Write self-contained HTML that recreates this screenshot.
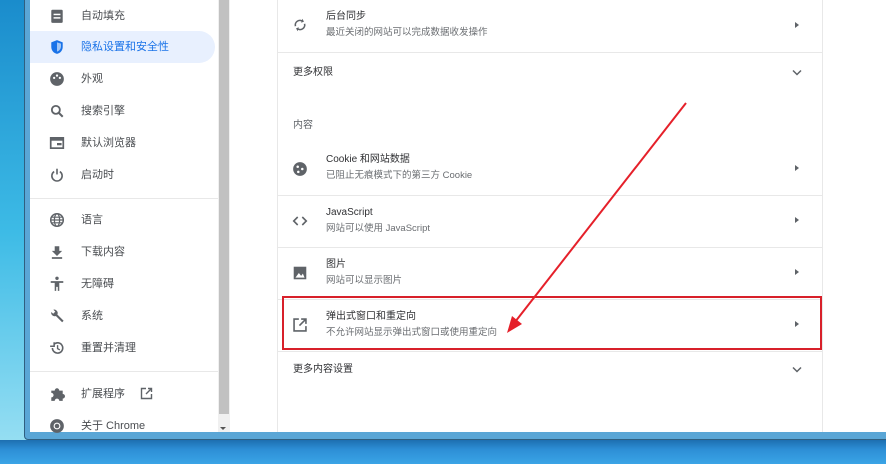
<!DOCTYPE html>
<html><head><meta charset="utf-8"><style>
*{margin:0;padding:0;box-sizing:border-box}
body{width:886px;height:464px;overflow:hidden;position:relative;font-family:"Liberation Sans","Noto Sans CJK SC",sans-serif;background:linear-gradient(180deg,#1a8ccc 0%,#3dbbe6 50%,#9fe2f4 100%)}
.bottom{position:absolute;left:0;top:440px;width:886px;height:24px;background:linear-gradient(180deg,#1d6fb0,#2d8fd6 40%,#3aa4e6)}
.win{position:absolute;left:24px;top:-10px;width:880px;height:450px;background:#5aa6d6;border:1px solid #2f5f80;border-radius:0 0 4px 4px}
.side{position:absolute;left:30px;top:0;width:188px;height:432px;background:#fff}
.sb{position:absolute;left:218px;top:0;width:12px;height:432px;background:#f0f0f0}
.thumb{position:absolute;left:219px;top:0;width:10px;height:414px;background:#c1c1c1}
.main{position:absolute;left:230px;top:0;width:656px;height:432px;background:#fff}
.card{position:absolute;left:277px;top:0;width:546px;height:432px;border-left:1px solid #e8e8e8;border-right:1px solid #e8e8e8;background:#fff}
.it{position:absolute;left:30px;width:185px;height:32px;font-size:11px;color:#4a4d51;line-height:32px;padding-left:51px}
.it.sel{background:#e8f0fe;color:#1a73e8;border-radius:0 16px 16px 0}
.ic{position:absolute;left:19px;top:8px;width:16px;height:16px}
.hr{position:absolute;left:30px;width:188px;height:1px;background:#e8e8e8}
.row{position:absolute;left:278px;width:544px;border-top:1px solid #e8e8e8}
.t1{position:absolute;left:48px;font-size:10px;line-height:13px;color:#303134}
.t2{position:absolute;left:48px;font-size:9.5px;line-height:13px;color:#6a6d71}
.ri{position:absolute;left:14px;width:16px;height:16px}
.tri{position:absolute;left:517px;width:0;height:0;border-left:4px solid #5f6368;border-top:3.5px solid transparent;border-bottom:3.5px solid transparent}
.lab{position:absolute;left:293px;font-size:10px;line-height:13px;color:#303134}
</style></head><body>
<div class="bottom"></div>
<div class="win"></div>
<div class="side"></div>
<div class="sb"></div><div class="thumb"></div>
<div style="position:absolute;left:220px;top:427px;border-top:3px solid #555;border-left:3px solid transparent;border-right:3px solid transparent"></div>
<div class="main"></div>
<div class="card"></div>

<div class="it" style="top:0">自动填充<svg class="ic" viewBox="0 0 14 14"><rect x="2" y="1.5" width="10" height="11.5" rx="1" fill="#5f6368"/><rect x="4" y="5" width="6" height="1.3" fill="#fff"/><rect x="4" y="8" width="6" height="1.3" fill="#fff"/></svg></div>
<div class="it sel" style="top:31px">隐私设置和安全性<svg class="ic" viewBox="0 0 14 14"><path d="M7 1L2 3v4c0 3 2.2 5.5 5 6 2.8-.5 5-3 5-6V3z" fill="#1a73e8"/><path d="M7 3v8c2-.5 3.5-2.3 3.5-4.5V4z" fill="#fff" opacity=".6"/></svg></div>
<div class="it" style="top:63px">外观<svg class="ic" viewBox="0 0 14 14"><circle cx="7" cy="7" r="6" fill="#5f6368"/><circle cx="4.5" cy="6" r="1" fill="#fff"/><circle cx="7" cy="4" r="1" fill="#fff"/><circle cx="9.5" cy="6" r="1" fill="#fff"/></svg></div>
<div class="it" style="top:95px">搜索引擎<svg class="ic" viewBox="0 0 14 14"><circle cx="6" cy="6" r="3.5" stroke="#5f6368" stroke-width="1.6" fill="none"/><path d="M8.5 8.5L12 12" stroke="#5f6368" stroke-width="1.8"/></svg></div>
<div class="it" style="top:127px">默认浏览器<svg class="ic" viewBox="0 0 14 14"><rect x="1.5" y="2.5" width="11" height="9" stroke="#5f6368" stroke-width="1.5" fill="none"/><rect x="1.5" y="2.5" width="11" height="2.5" fill="#5f6368"/><rect x="7" y="7" width="4" height="2" fill="#5f6368"/></svg></div>
<div class="it" style="top:159px">启动时<svg class="ic" viewBox="0 0 14 14"><path d="M4.5 4a4.5 4.5 0 1 0 5 0" stroke="#5f6368" stroke-width="1.4" fill="none"/><path d="M7 1.5v5" stroke="#5f6368" stroke-width="1.4"/></svg></div>
<div class="hr" style="top:198px"></div>
<div class="it" style="top:204px">语言<svg class="ic" viewBox="0 0 14 14"><circle cx="7" cy="7" r="5.5" stroke="#5f6368" stroke-width="1.3" fill="none"/><ellipse cx="7" cy="7" rx="2.3" ry="5.5" stroke="#5f6368" stroke-width="1.1" fill="none"/><path d="M1.5 7h11M2.5 4.5h9M2.5 9.5h9" stroke="#5f6368" stroke-width="1"/></svg></div>
<div class="it" style="top:236px">下载内容<svg class="ic" viewBox="0 0 14 14"><path d="M5 2h4v4h2.5L7 10.5 2.5 6H5z" fill="#5f6368"/><rect x="2.5" y="11.5" width="9" height="1.5" fill="#5f6368"/></svg></div>
<div class="it" style="top:268px">无障碍<svg class="ic" viewBox="0 0 14 14"><circle cx="7" cy="2" r="1.5" fill="#5f6368"/><path d="M1.5 4.5h11v1.5H9V13H7.7V9.5H6.3V13H5V6H1.5z" fill="#5f6368"/></svg></div>
<div class="it" style="top:300px">系统<svg class="ic" viewBox="0 0 14 14"><path d="M2 3.5a3 3 0 0 0 4 3.5l5.5 5.5 1.3-1.3L7.3 5.7A3 3 0 0 0 3.8 1.5L5.5 3.2 3.7 5z" fill="#5f6368"/></svg></div>
<div class="it" style="top:332px">重置并清理<svg class="ic" viewBox="0 0 14 14"><path d="M3 7a4.5 4.5 0 1 0 1.3-3.2" stroke="#5f6368" stroke-width="1.4" fill="none"/><path d="M1 5.5h3.5V2" stroke="#5f6368" stroke-width="1.3" fill="none"/><path d="M7.5 4.5v3l2 1.2" stroke="#5f6368" stroke-width="1.2" fill="none"/></svg></div>
<div class="hr" style="top:371px"></div>
<div class="it" style="top:378px">扩展程序<svg class="ic" viewBox="0 0 14 14"><path d="M2 4h3a2 2 0 0 1 4 0h3v3a2 2 0 0 1 0 4v2H9a2 2 0 0 0-4 0H2v-3a2 2 0 0 0 0-4z" fill="#5f6368"/></svg><svg style="position:absolute;left:110px;top:9px" width="13" height="13" viewBox="0 0 13 13"><path d="M6 1.5H1.5v10h10V7" stroke="#5f6368" stroke-width="1.4" fill="none"/><path d="M8 1.5h3.5V5M11.5 1.5L6 7" stroke="#5f6368" stroke-width="1.4" fill="none"/></svg></div>
<div class="it" style="top:410px">关于 Chrome<svg class="ic" viewBox="0 0 14 14"><circle cx="7" cy="7" r="6" fill="#5f6368"/><circle cx="7" cy="7" r="3" fill="#fff"/><circle cx="7" cy="7" r="2" fill="#5f6368"/></svg></div>

<div class="row" style="top:-1px;height:54px;border-top:none"><svg class="ri" style="top:18px" viewBox="0 0 14 14"><path d="M3 8a4 4 0 0 1 6.5-4M11 6a4 4 0 0 1-6.5 4" stroke="#5f6368" stroke-width="1.4" fill="none"/><path d="M9 1.5l1.5 2.5L8 5z M5 12.5L3.5 10 6 9z" fill="#5f6368"/></svg><div class="t1" style="top:11px">后台同步</div><div class="t2" style="top:27px">最近关闭的网站可以完成数据收发操作</div><div class="tri" style="top:23px"></div></div>
<div class="row" style="top:52px;height:40px"></div>
<div class="lab" style="top:66px">更多权限</div>
<svg style="position:absolute;left:792px;top:69px" width="10" height="7" viewBox="0 0 10 7"><path d="M1 1.5l4 4 4-4" stroke="#5f6368" stroke-width="1.5" fill="none"/></svg>
<div class="lab" style="top:119px;color:#5f6368">内容</div>
<div class="row" style="top:143px;height:52px;border-top:none"><svg class="ri" style="top:18px" viewBox="0 0 14 14"><circle cx="7" cy="7" r="6" fill="#5f6368"/><circle cx="5" cy="5" r="1.1" fill="#fff"/><circle cx="9" cy="7" r="1.1" fill="#fff"/><circle cx="5.5" cy="9.5" r="1.1" fill="#fff"/></svg><div class="t1" style="top:10px">Cookie 和网站数据</div><div class="t2" style="top:26px">已阻止无痕模式下的第三方 Cookie</div><div class="tri" style="top:22px"></div></div>
<div class="row" style="top:195px;height:52px"><svg class="ri" style="top:17px" viewBox="0 0 14 14"><path d="M5 3.5L1.5 7 5 10.5M9 3.5L12.5 7 9 10.5" stroke="#5f6368" stroke-width="1.4" fill="none"/></svg><div class="t1" style="top:10px">JavaScript</div><div class="t2" style="top:26px">网站可以使用 JavaScript</div><div class="tri" style="top:21px"></div></div>
<div class="row" style="top:247px;height:52px"><svg class="ri" style="top:17px" viewBox="0 0 14 14"><rect x="1.5" y="1.5" width="11" height="11" fill="#5f6368"/><path d="M3 11l3-4 2 2.5 1.5-2L11 11z" fill="#fff"/></svg><div class="t1" style="top:10px">图片</div><div class="t2" style="top:26px">网站可以显示图片</div><div class="tri" style="top:21px"></div></div>
<div class="row" style="top:299px;height:52px"><svg class="ri" style="top:17px" viewBox="0 0 14 14"><path d="M6 1.8H1.8v10.4h10.4V8" stroke="#5f6368" stroke-width="1.4" fill="none"/><path d="M8 1.8h4.2V6M12.2 1.8L6.5 7.5" stroke="#5f6368" stroke-width="1.4" fill="none"/></svg><div class="t1" style="top:10px">弹出式窗口和重定向</div><div class="t2" style="top:26px">不允许网站显示弹出式窗口或使用重定向</div><div class="tri" style="top:21px"></div></div>
<div class="row" style="top:351px;height:40px"></div>
<div class="lab" style="top:363px">更多内容设置</div>
<svg style="position:absolute;left:792px;top:366px" width="10" height="7" viewBox="0 0 10 7"><path d="M1 1.5l4 4 4-4" stroke="#5f6368" stroke-width="1.5" fill="none"/></svg>

<div style="position:absolute;left:282px;top:296px;width:540px;height:54px;border:2px solid #d8202a"></div>
<svg style="position:absolute;left:0;top:0" width="886" height="464"><path d="M686 103L515 322" stroke="#e5202a" stroke-width="2"/><path d="M507 333L512 316 522 324z" fill="#e5202a"/></svg>
</body></html>
